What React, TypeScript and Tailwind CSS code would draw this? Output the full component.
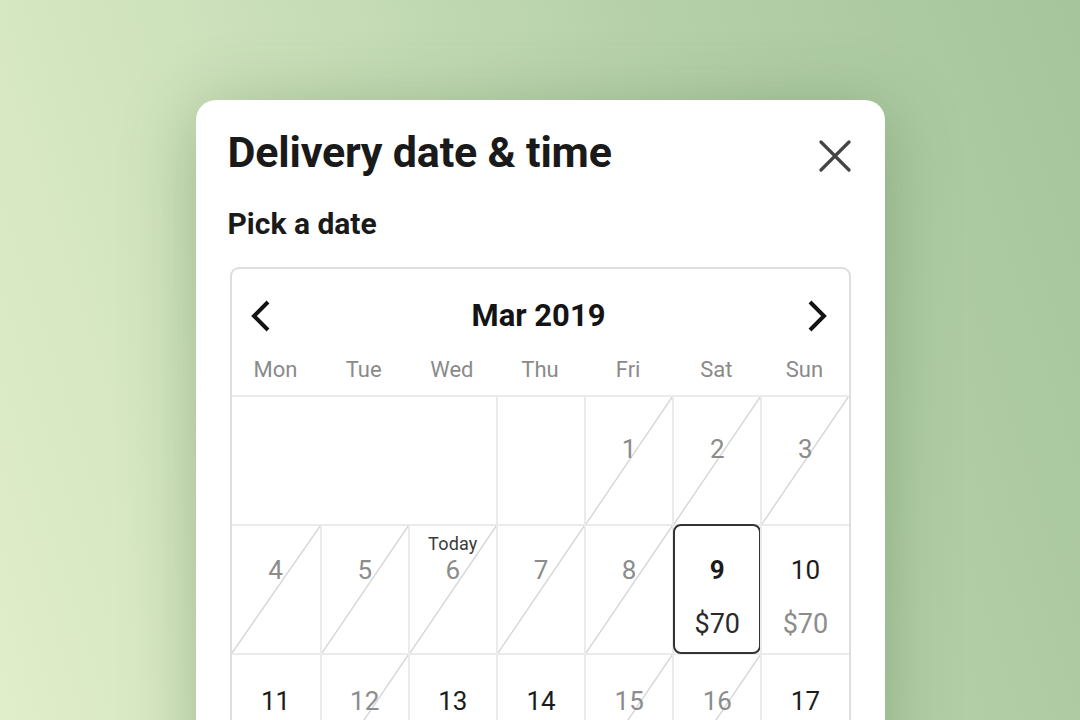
import React from "react";

type Cell =
  | { kind: "blank"; span?: number }
  | { kind: "day"; n: number; disabled?: boolean; selected?: boolean; price?: string; today?: boolean; priceGray?: boolean };

const rows: { cells: Cell[]; pt: string }[] = [
  {
    pt: "pt-[37px]",
    cells: [
      { kind: "blank", span: 3 },
      { kind: "blank" },
      { kind: "day", n: 1, disabled: true },
      { kind: "day", n: 2, disabled: true },
      { kind: "day", n: 3, disabled: true },
    ],
  },
  {
    pt: "pt-[29px]",
    cells: [
      { kind: "day", n: 4, disabled: true },
      { kind: "day", n: 5, disabled: true },
      { kind: "day", n: 6, disabled: true, today: true },
      { kind: "day", n: 7, disabled: true },
      { kind: "day", n: 8, disabled: true },
      { kind: "day", n: 9, selected: true, price: "$70" },
      { kind: "day", n: 10, price: "$70", priceGray: true },
    ],
  },
  {
    pt: "pt-[31px]",
    cells: [
      { kind: "day", n: 11 },
      { kind: "day", n: 12, disabled: true },
      { kind: "day", n: 13 },
      { kind: "day", n: 14 },
      { kind: "day", n: 15, disabled: true },
      { kind: "day", n: 16, disabled: true },
      { kind: "day", n: 17 },
    ],
  },
];

function Diagonal() {
  return (
    <svg
      className="absolute inset-0 w-full h-full pointer-events-none"
      viewBox="0 0 100 100"
      preserveAspectRatio="none"
    >
      <line x1="0" y1="100" x2="100" y2="0" stroke="#d6d6d6" strokeWidth="1.4" vectorEffect="non-scaling-stroke" />
    </svg>
  );
}

export default function App() {
  return (
    <div
      className="w-[1080px] h-[720px] overflow-hidden flex justify-center pt-[100px] bg-[linear-gradient(72deg,#e0eec9_0%,#cbe0ba_35%,#b3cfa8_70%,#a6c59c_100%)]"
      style={{ fontFamily: "Roboto, 'Noto Sans', sans-serif" }}
    >
      <div className="w-[689px] h-[760px] shrink-0 bg-white rounded-[20px] shadow-[0_10px_70px_rgba(60,100,50,0.35)] px-[34px] pt-[26px]">
        <div className="flex items-start justify-between">
          <h1 className="text-[43px] leading-[52px] font-bold text-[#1a1a1a] tracking-[-0.2px] ml-[-2px]">Delivery date &amp; time</h1>
          <button className="mt-[14px] w-[32px] h-[32px] flex items-center justify-center">
            <svg width="32" height="32" viewBox="0 0 32 32">
              <path d="M2 2 L30 30 M30 2 L2 30" stroke="#444" strokeWidth="3.2" strokeLinecap="round" fill="none" />
            </svg>
          </button>
        </div>
        <h2 className="mt-[29px] text-[30px] leading-[34px] font-bold text-[#1a1a1a] ml-[-2px]">Pick a date</h2>

        <div className="mt-[26px] border-2 border-[#dedede] rounded-[9px] overflow-hidden">
          <div className="h-[90px] pt-[4px] flex items-center justify-between pl-[16px] pr-[19px]">
            <svg width="26" height="34" viewBox="0 0 26 34">
              <path d="M20 3 L6 17 L20 31" stroke="#141414" strokeWidth="4" fill="none" strokeLinecap="butt" strokeLinejoin="miter" />
            </svg>
            <div className="text-[31px] font-bold text-[#141414] leading-[36px]">Mar 2019</div>
            <svg width="26" height="34" viewBox="0 0 26 34">
              <path d="M6 3 L20 17 L6 31" stroke="#141414" strokeWidth="4" fill="none" strokeLinecap="butt" strokeLinejoin="miter" />
            </svg>
          </div>
          <div className="grid grid-cols-7 h-[36px]">
            {["Mon", "Tue", "Wed", "Thu", "Fri", "Sat", "Sun"].map((d) => (
              <div key={d} className="text-center text-[22px] leading-[22px] text-[#8a8a8a]">
                {d}
              </div>
            ))}
          </div>
          {rows.map((row, ri) => (
            <div key={ri} className="grid grid-cols-7 h-[129px] border-t-2 border-[#ebebeb]">
              {row.cells.map((c, ci) => {
                const first = ci === 0;
                if (c.kind === "blank") {
                  return (
                    <div
                      key={ci}
                      className={`${c.span === 3 ? "col-span-3" : ""} ${first ? "" : "border-l-2 border-[#ebebeb]"}`}
                    />
                  );
                }
                return (
                  <div
                    key={ci}
                    className={`relative ${first ? "" : "border-l-2 border-[#ebebeb]"}`}
                  >
                    {c.disabled && <Diagonal />}
                    {c.selected && (
                      <div className="absolute left-[-1px] right-[-1px] top-[-2px] bottom-[-1px] border-2 border-[#333] rounded-[8px]" />
                    )}
                    <div className={`relative flex flex-col items-center ${row.pt}`}>
                      {c.today && (
                        <div className="absolute top-[8px] text-[18px] leading-[20px] text-[#3a3a3a] tracking-[0.2px]">Today</div>
                      )}
                      <div
                        className={`text-[26px] leading-[30px] ${
                          c.disabled ? "text-[#8c8c8c]" : "text-[#1c1c1c]"
                        } ${c.selected ? "font-bold" : ""}`}
                      >
                        {c.n}
                      </div>
                      {c.price && (
                        <div
                          className={`mt-[24px] text-[27px] leading-[30px] ${
                            c.priceGray ? "text-[#8c8c8c]" : "text-[#2a2a2a]"
                          }`}
                        >
                          {c.price}
                        </div>
                      )}
                    </div>
                  </div>
                );
              })}
            </div>
          ))}
        </div>
      </div>
    </div>
  );
}
